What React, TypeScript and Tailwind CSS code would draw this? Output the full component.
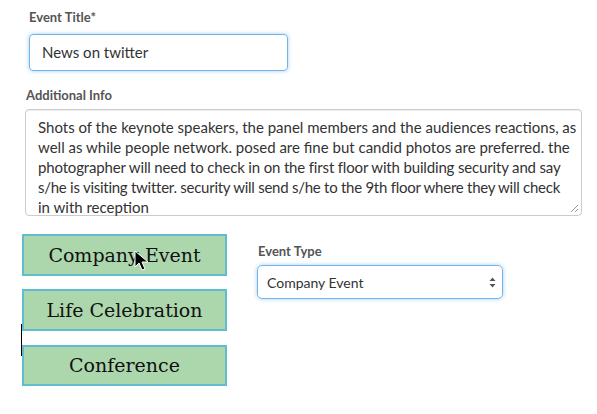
import React from "react";

const lato = { fontFamily: "Lato, 'Open Sans', sans-serif" };

function GreenBtn({ children, h }: { children: React.ReactNode; h: string }) {
  return (
    <div
      className={`w-[205px] ${h} flex items-center justify-center bg-[#acd7ad] border-2 border-[#62bccf] text-[#111] text-[19px]`}
      style={{ fontFamily: "'DejaVu Serif', 'Liberation Serif', serif" }}
    >
      {children}
    </div>
  );
}

export default function App() {
  return (
    <div className="w-[597px] h-[414px] bg-white relative overflow-hidden" style={lato}>
      <div className="pl-[29px] pt-[9px]">
        <div className="text-[13px] font-bold text-[#555] leading-[16px]">Event Title*</div>
        <div className="mt-[9px] w-[259px] h-[37px] rounded-[4px] border border-[#74b3ea] shadow-[0_0_4px_rgba(102,175,233,0.6)] flex items-center pl-[12px] text-[15px] text-[#333]">
          News on twitter
        </div>
      </div>
      <div className="pl-[25px] pt-[16px]">
        <div className="pl-[1px] text-[13px] font-bold text-[#555] leading-[16px]">Additional Info</div>
        <div className="relative mt-[6px] w-[557px] h-[107px] rounded-[4px] border border-[#ccc] shadow-[inset_0_1px_1px_rgba(0,0,0,0.075)] pl-[12px] pr-[4px] pt-[7px] text-[15px] leading-[20px] text-[#333] whitespace-nowrap">
          <div>Shots of the keynote speakers, the panel members and the audiences reactions, as</div>
          <div>well as while people network. posed are fine but candid photos are preferred. the</div>
          <div className="tracking-[-0.16px]">photographer will need to check in on the first floor with building security and say</div>
          <div className="tracking-[-0.26px]">s/he is visiting twitter. security will send s/he to the 9th floor where they will check</div>
          <div>in with reception</div>
          <svg className="absolute right-[2px] bottom-[2px]" width="10" height="10" viewBox="0 0 10 10">
            <path d="M9 2 L2 9 M9 6 L6 9" stroke="#999" strokeWidth="1" />
          </svg>
        </div>
      </div>
      <div className="flex pt-[18px]">
        <div className="relative pl-[22px] flex flex-col">
          <GreenBtn h="h-[42px]">Company Event</GreenBtn>
          <div className="h-[13px]" />
          <GreenBtn h="h-[42px]">Life Celebration</GreenBtn>
          <div className="h-[14px]" />
          <GreenBtn h="h-[41px]">Conference</GreenBtn>
          <div className="absolute left-[21px] top-[90px] w-[1px] h-[32px] bg-black" />
          <svg className="absolute left-[134px] top-[16px]" width="16" height="22" viewBox="0 0 16 22">
            <path d="M1 1 L1 17 L5 13 L8 20 L11 19 L8 12 L14 12 Z" fill="#000" stroke="#fff" strokeWidth="1" />
          </svg>
        </div>
        <div className="pl-[30px] pt-[9px]">
          <div className="pl-[1px] text-[13px] font-bold text-[#555] leading-[16px]">Event Type</div>
          <div className="mt-[6px] w-[246px] h-[34px] rounded-[5px] border border-[#74b3ea] shadow-[0_0_4px_rgba(102,175,233,0.6)] flex items-center justify-between pl-[9px] pr-[6px] text-[14px] text-[#333]">
            <span>Company Event</span>
            <svg width="7" height="11" viewBox="0 0 7 11">
              <path d="M3.5 0.5 L6.5 4 L0.5 4 Z M3.5 10.5 L6.5 7 L0.5 7 Z" fill="#555" />
            </svg>
          </div>
        </div>
      </div>
    </div>
  );
}
